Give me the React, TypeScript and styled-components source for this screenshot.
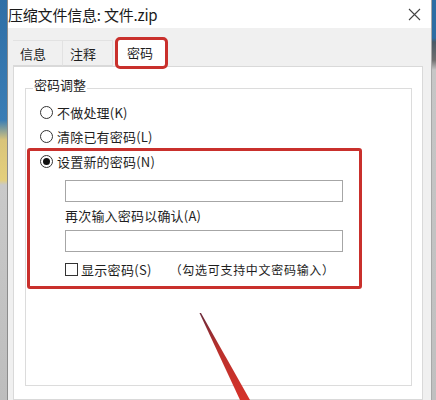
import styled, { createGlobalStyle } from "styled-components";

const GlobalStyle = createGlobalStyle`
    html, body {
        margin: 0;
        padding: 0;
        background: #ffffff;
    }
    * {
        box-sizing: border-box;
    }
`;

const Desktop = styled.div`
    position: relative;
    display: flex;
    width: 436px;
    height: 400px;
    overflow: hidden;
    font-family: "Noto Sans CJK SC", "Noto Sans", sans-serif;
    color: #1e1e1e;
`;

const LeftStrip = styled.div`
    width: 7px;
    flex-shrink: 0;
    background: linear-gradient(
        to bottom,
        #2f6fa6 0,
        #3a7db5 120px,
        #d9c47a 140px,
        #e4cf7c 180px,
        #c9c9c9 185px,
        #bdbdbd 400px
    );
`;

const RightStrip = styled.div`
    width: 4px;
    flex-shrink: 0;
    background: linear-gradient(
        to bottom,
        #2d6da3 0,
        #2d6da3 38px,
        #4a5a66 42px,
        #6e6e6e 60px,
        #c6c6c6 70px,
        #c0c0c0 400px
    );
`;

const Window = styled.div`
    flex: 1;
    display: flex;
    flex-direction: column;
    background: #f0f0f0;
    border-left: 1px solid #8c8c8c;
    border-right: 1px solid #a8a8a8;
`;

const TitleBar = styled.div`
    height: 28px;
    flex-shrink: 0;
    background: #ffffff;
    display: flex;
    align-items: center;
    justify-content: space-between;
    padding: 0 10px 0 0;
`;

const Title = styled.div`
    font-size: 15px;
    color: #1a1a1a;
    letter-spacing: -0.2px;
`;

const CloseIcon = styled.svg`
    width: 13px;
    height: 13px;
    margin-top: 1px;
`;

const Body = styled.div`
    flex: 1;
    display: flex;
    flex-direction: column;
    padding: 0 8px 0 5px;
`;

const TabRow = styled.div`
    height: 38px;
    flex-shrink: 0;
    display: flex;
    align-items: flex-end;
    position: relative;
    z-index: 1;
`;

const Tab = styled.div<{ $active?: boolean }>`
    height: ${(p) => (p.$active ? "28px" : "26px")};
    margin-bottom: ${(p) => (p.$active ? "-1px" : "0")};
    margin-left: ${(p) => (p.$active ? "4px" : "0")};
    padding: ${(p) => (p.$active ? "0 12px 3px 9px" : "0 16px 0 7px")};
    display: flex;
    align-items: center;
    font-size: 13px;
    background: ${(p) => (p.$active ? "#ffffff" : "#f0f0f0")};
    border: 1px solid ${(p) => (p.$active ? "#d9d9d9" : "#e2e2e2")};
    border-bottom: ${(p) => (p.$active ? "none" : "1px solid #d9d9d9")};
    border-left: ${(p) => (p.$active ? "1px solid #d9d9d9" : "none")};
    border-radius: ${(p) => (p.$active ? "3px" : "0")};
    outline: ${(p) => (p.$active ? "3px solid #c9302c" : "none")};
    outline-offset: -1px;
`;

const Panel = styled.div`
    flex: 1;
    background: #ffffff;
    border: 1px solid #d9d9d9;
    padding: 0 10px 0 11px;
`;

const GroupBox = styled.div`
    position: relative;
    margin-top: 21px;
    height: 298px;
    border: 1px solid #dcdcdc;
    padding: 11px 0 0 1px;
`;

const Legend = styled.span`
    position: absolute;
    top: -12px;
    left: 7px;
    padding: 0 1px;
    background: #ffffff;
    font-size: 13px;
    line-height: 16px;
`;

const OptionRow = styled.label<{ $inset?: number }>`
    height: ${(p) => (p.$inset ? "20px" : "24px")};
    display: flex;
    align-items: center;
    gap: 4px;
    padding-left: ${(p) => p.$inset ?? 13}px;
    font-size: 13px;
    letter-spacing: 0.2px;
`;

const RadioDot = styled.span<{ $checked?: boolean }>`
    width: 13px;
    height: 13px;
    border-radius: 50%;
    border: 1px solid #333333;
    background: #ffffff;
    display: inline-flex;
    align-items: center;
    justify-content: center;

    &::after {
        content: "";
        width: 7px;
        height: 7px;
        border-radius: 50%;
        background: ${(p) => (p.$checked ? "#111111" : "transparent")};
    }
`;

const Highlight = styled.div`
    width: 335px;
    border: 3px solid #c9302c;
    border-radius: 3px;
    padding: 0 0 8px 0;
`;

const Field = styled.div<{ $gap: number }>`
    margin: ${(p) => p.$gap}px 0 0 35px;
    width: 278px;
    height: 22px;
    border: 1px solid #a6a6a6;
    background: #ffffff;
`;

const FieldLabel = styled.div`
    margin: 4px 0 0 35px;
    height: 18px;
    display: flex;
    align-items: center;
    font-size: 13px;
    letter-spacing: 0.2px;
`;

const CheckRow = styled.div`
    margin: 8px 0 0 35px;
    height: 18px;
    display: flex;
    align-items: center;
    font-size: 13px;
    letter-spacing: 0.3px;
`;

const CheckBox = styled.span`
    width: 13px;
    height: 13px;
    border: 1px solid #333333;
    margin-right: 3px;
`;

const Hint = styled.span`
    margin-left: 18px;
    font-size: 12px;
    letter-spacing: 0.7px;
`;

const Arrow = styled.svg`
    position: absolute;
    left: 0;
    top: 0;
    width: 436px;
    height: 400px;
    pointer-events: none;
`;

export default function App() {
    return (
        <>
            <GlobalStyle />
            <Desktop>
                <LeftStrip />
                <Window>
                    <TitleBar>
                        <Title>压缩文件信息: 文件.zip</Title>
                        <CloseIcon viewBox="0 0 13 13">
                            <path d="M1 1 L12 12 M12 1 L1 12" stroke="#444" strokeWidth="1.1" fill="none" />
                        </CloseIcon>
                    </TitleBar>
                    <Body>
                        <TabRow>
                            <Tab>信息</Tab>
                            <Tab>注释</Tab>
                            <Tab $active>密码</Tab>
                        </TabRow>
                        <Panel>
                            <GroupBox>
                                <Legend>密码调整</Legend>
                                <OptionRow>
                                    <RadioDot />
                                    不做处理(K)
                                </OptionRow>
                                <OptionRow>
                                    <RadioDot />
                                    清除已有密码(L)
                                </OptionRow>
                                <Highlight>
                                    <OptionRow $inset={10}>
                                        <RadioDot $checked />
                                        设置新的密码(N)
                                    </OptionRow>
                                    <Field $gap={9} />
                                    <FieldLabel>再次输入密码以确认(A)</FieldLabel>
                                    <Field $gap={6} />
                                    <CheckRow>
                                        <CheckBox />
                                        显示密码(S)
                                        <Hint>（勾选可支持中文密码输入）</Hint>
                                    </CheckRow>
                                </Highlight>
                            </GroupBox>
                        </Panel>
                    </Body>
                </Window>
                <RightStrip />
                <Arrow viewBox="0 0 436 400">
                    <defs>
                        <linearGradient id="arrowFill" x1="0" y1="0" x2="0" y2="1">
                            <stop offset="0" stopColor="#6b2a3a" />
                            <stop offset="0.4" stopColor="#b8302c" />
                            <stop offset="1" stopColor="#d5322a" />
                        </linearGradient>
                    </defs>
                    <polygon points="199.5,313 201,313 250,400 240,400" fill="url(#arrowFill)" />
                </Arrow>
            </Desktop>
        </>
    );
}
